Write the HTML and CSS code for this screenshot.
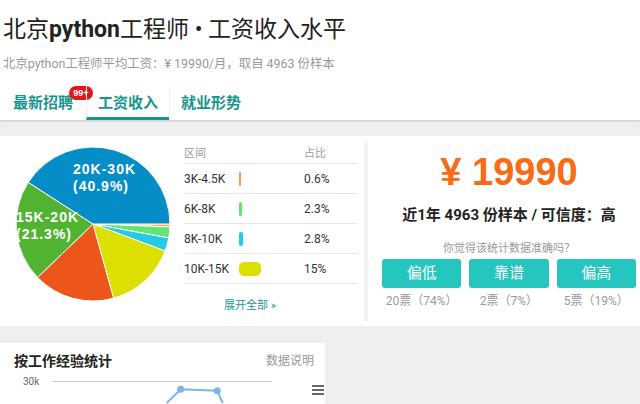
FILE: index.html
```html
<!DOCTYPE html>
<html lang="zh-CN">
<head>
<meta charset="utf-8">
<title>北京python工程师 工资收入水平</title>
<link rel="stylesheet" href="styles.css">
</head>
<body>
<header class="head">
  <h1 class="title">北京<b>python</b>工程师 • 工资收入水平</h1>
  <p class="sub">北京python工程师平均工资：¥ 19990/月，取自 4963 份样本</p>
  <nav class="tabs">
    <a class="tab tab-first">最新招聘<span class="badge">99+</span></a>
    <a class="tab active">工资收入</a>
    <a class="tab">就业形势</a>
  </nav>
</header>
<main class="page">
  <section class="card salary">
    <div class="pie">
      <svg width="156" height="156" viewBox="-78 -78 156 156">
        <g stroke="#fff" stroke-width="1" stroke-linejoin="round">
          <path fill="#FF9655" d="M0 0 L77 0 A77 77 0 0 1 76.95 2.90 Z"/>
          <path fill="#64E572" d="M0 0 L76.95 2.90 A77 77 0 0 1 75.72 13.95 Z"/>
          <path fill="#24CBE5" d="M0 0 L75.72 13.95 A77 77 0 0 1 72.11 26.99 Z"/>
          <path fill="#DDDF00" d="M0 0 L72.11 26.99 A77 77 0 0 1 20.55 74.21 Z"/>
          <path fill="#ED561B" d="M0 0 L20.55 74.21 A77 77 0 0 1 -55.45 53.43 Z"/>
          <path fill="#50B432" d="M0 0 L-55.45 53.43 A77 77 0 0 1 -64.76 -41.65 Z"/>
          <path fill="#058DC7" d="M0 0 L-64.76 -41.65 A77 77 0 0 1 77 0 Z"/>
        </g>
      </svg>
      <div class="pie-label pie-label-a">20K-30K<br>(40.9%)</div>
      <div class="pie-label pie-label-b">15K-20K<br>(21.3%)</div>
    </div>
    <div class="dist">
      <div class="row row-head"><span>区间</span><span></span><span>占比</span></div>
      <div class="row"><span>3K-4.5K</span><span><i class="bar bar-peach" style="width:2px"></i></span><span>0.6%</span></div>
      <div class="row"><span>6K-8K</span><span><i class="bar bar-green" style="width:3px"></i></span><span>2.3%</span></div>
      <div class="row"><span>8K-10K</span><span><i class="bar bar-cyan" style="width:4px"></i></span><span>2.8%</span></div>
      <div class="row"><span>10K-15K</span><span><i class="bar bar-yellow" style="width:22px"></i></span><span>15%</span></div>
      <a class="more">展开全部 »</a>
    </div>
    <div class="divider"></div>
    <div class="summary">
      <div class="price">¥ 19990</div>
      <div class="meta">近1年 4963 份样本 / 可信度：高</div>
      <div class="ask">你觉得该统计数据准确吗？</div>
      <div class="votes">
        <div class="vote"><a class="vote-btn">偏低</a><div class="vote-count">20票（74%）</div></div>
        <div class="vote"><a class="vote-btn">靠谱</a><div class="vote-count">2票（7%）</div></div>
        <div class="vote"><a class="vote-btn">偏高</a><div class="vote-count">5票（19%）</div></div>
      </div>
    </div>
  </section>
  <section class="card exp">
    <div class="exp-head">
      <h2 class="exp-title">按工作经验统计</h2>
      <span class="exp-note">数据说明</span>
    </div>
    <svg class="exp-chart" width="325" height="40" viewBox="0 0 325 40">
      <text class="axis" x="23" y="14">30k</text>
      <line x1="52" y1="10.5" x2="272" y2="10.5" stroke="#d0d0d0" stroke-width="1"/>
      <polyline points="166.7,32 180.7,18.3 217.3,19.7 222.7,32" fill="none" stroke="#7cb5ec" stroke-width="2"/>
      <circle cx="180.7" cy="18.3" r="3.5" fill="#7cb5ec"/>
      <circle cx="217.3" cy="19.7" r="3.5" fill="#7cb5ec"/>
      <g stroke="#666" stroke-width="2">
        <line x1="312" y1="15" x2="324" y2="15"/>
        <line x1="312" y1="19" x2="324" y2="19"/>
        <line x1="312" y1="23" x2="324" y2="23"/>
      </g>
    </svg>
  </section>
</main>
</body>
</html>
```
FILE: styles.css
```css
* { box-sizing: border-box; }
html, body { margin: 0; }
body {
  width: 640px;
  height: 404px;
  overflow: hidden;
  background: #efefef;
  font-family: Roboto, "Noto Sans CJK SC", sans-serif;
  color: #333;
}
a { text-decoration: none; cursor: pointer; }

.head {
  background: #fff;
  box-shadow: 0 1px 2px rgba(0, 0, 0, 0.18);
  position: relative;
}
.title {
  margin: 0;
  padding: 14px 0 0 3px;
  font-size: 23px;
  line-height: 32px;
  font-weight: 400;
  color: #222;
}
.title b { font-weight: 700; }
.sub {
  margin: 8px 0 0;
  padding-left: 3px;
  font-size: 12.4px;
  line-height: 20px;
  color: #999;
}
.tabs { display: flex; margin-top: 11px; }
.tab {
  position: relative;
  width: 83px;
  text-align: center;
  padding-top: 4px;
  line-height: 28px;
  border-bottom: 3px solid transparent;
  font-size: 15px;
  font-weight: 700;
  color: #17958d;
}
.tab-first { width: 86px; }
.tab + .tab { border-left: 1px solid #f0f0f0; }
.tab.active { border-bottom-color: #17958d; }
.badge {
  position: absolute;
  left: 69px;
  top: 1px;
  width: 24px;
  height: 14px;
  border-radius: 7px;
  background: #e3161b;
  color: #fff;
  font-family: "Liberation Sans", Arial, sans-serif;
  font-size: 9px;
  line-height: 14px;
  font-weight: 700;
  text-align: center;
}

.page { padding-top: 16px; }
.card { background: #fff; }

.salary { display: flex; height: 190px; padding-left: 15px; }
.pie { position: relative; width: 156px; height: 156px; margin-top: 10px; flex: none; }
.pie svg { display: block; overflow: visible; }
.pie-label {
  position: absolute;
  font-family: "Liberation Sans", Arial, sans-serif;
  font-size: 14px;
  letter-spacing: 1px;
  line-height: 16.5px;
  font-weight: 700;
  color: #fff;
  white-space: nowrap;
}
.pie-label-a { left: 58px; top: 15px; }
.pie-label-b { left: 1px; top: 63px; }

.dist { width: 173px; margin: 4px 0 0 13px; flex: none; }
.row {
  display: grid;
  grid-template-columns: 55px 65px 1fr;
  align-items: center;
  height: 30px;
  border-bottom: 1px solid #e6e6e6;
  font-size: 12px;
  color: #333;
}
.row-head { height: 24px; font-size: 11px; color: #999; }
.bar { display: block; height: 14px; border-radius: 3px; }
.bar-peach { background: #FF9655; border-radius: 1px; }
.bar-green { background: #64E572; border-radius: 2px; }
.bar-cyan { background: #24CBE5; border-radius: 2px; }
.bar-yellow { background: #DDDF00; border-radius: 5px; }
.more {
  display: block;
  padding-left: 40px;
  line-height: 44px;
  font-size: 11px;
  color: #1a9a90;
}

.divider {
  width: 4px;
  height: 178px;
  margin: 7px 0 0 7px;
  background: #f0f0f0;
  flex: none;
}

.summary { flex: 1; padding: 14px 4px 0 14px; text-align: center; }
.price {
  font-family: "Liberation Sans", Arial, sans-serif;
  font-size: 38px;
  line-height: 44px;
  font-weight: 700;
  color: #fb6a14;
}
.meta {
  margin-top: 11px;
  font-size: 15px;
  line-height: 20px;
  font-weight: 700;
  color: #222;
}
.ask { margin-top: 15px; font-size: 11px; line-height: 18px; color: #999; }
.votes {
  display: grid;
  grid-template-columns: repeat(3, 1fr);
  gap: 8px;
  margin-top: 1px;
}
.vote-btn {
  display: block;
  height: 29px;
  line-height: 29px;
  border-radius: 3px;
  background: #25c5c0;
  color: #fff;
  font-size: 15px;
}
.vote-count { margin-top: 5px; font-size: 12px; line-height: 16px; color: #999; }

.exp { width: 325px; margin-top: 17px; height: 80px; }
.exp-head {
  display: flex;
  justify-content: space-between;
  align-items: center;
  padding: 8px 11px 0 14px;
  line-height: 20px;
}
.exp-title { margin: 0; font-size: 14px; font-weight: 700; color: #222; }
.exp-note { font-size: 12px; color: #999; }
.exp-chart { display: block; }
.axis { font-family: Roboto, sans-serif; font-size: 10px; fill: #666; }
```
